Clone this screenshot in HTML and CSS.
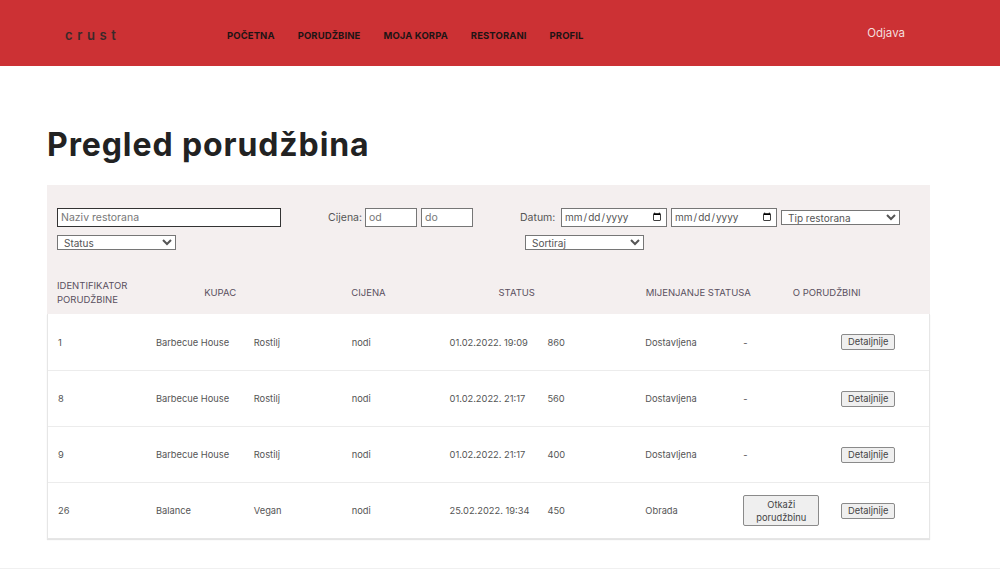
FILE: index.html
```html
<!DOCTYPE html>
<html lang="sr">
<head>
<meta charset="utf-8">
<title>Pregled porudžbina</title>
<link rel="stylesheet" href="styles.css">
</head>
<body>
<header class="topbar">
  <div class="logo">crust</div>
  <nav class="nav">
    <a class="nav-link" href="#">Početna</a>
    <a class="nav-link" href="#">Porudžbine</a>
    <a class="nav-link" href="#">Moja korpa</a>
    <a class="nav-link" href="#">Restorani</a>
    <a class="nav-link" href="#">Profil</a>
  </nav>
  <a class="logout" href="#">Odjava</a>
</header>

<main class="content">
  <h1 class="title">Pregled porudžbina</h1>

  <section class="panel">
    <div class="filters">
      <div class="f-name"><input class="inp inp-name" type="text" placeholder="Naziv restorana"></div>
      <div class="f-price">
        <span class="lbl lbl-price">Cijena:</span>
        <input class="inp inp-num" type="text" placeholder="od">
        <input class="inp inp-num" type="text" placeholder="do">
      </div>
      <div class="f-date">
        <span class="lbl lbl-date">Datum:</span>
        <input class="inp inp-date" type="date">
        <input class="inp inp-date" type="date">
        <select class="sel sel-type"><option>Tip restorana</option></select>
      </div>
      <div class="f-status"><select class="sel sel-status"><option>Status</option></select></div>
      <div class="f-sort"><select class="sel sel-sort"><option>Sortiraj</option></select></div>
    </div>

    <div class="thead">
      <div class="th">Identifikator porudžbine</div>
      <div class="th">Kupac</div>
      <div class="th">Cijena</div>
      <div class="th">Status</div>
      <div class="th">Mijenjanje statusa</div>
      <div class="th">O porudžbini</div>
    </div>
  </section>

  <section class="tbody">
    <div class="tr">
      <div class="td">1</div><div class="td">Barbecue House</div><div class="td">Rostilj</div><div class="td">nodi</div><div class="td">01.02.2022. 19:09</div><div class="td">860</div><div class="td">Dostavljena</div><div class="td">-</div><div class="td"><button class="btn">Detaljnije</button></div>
    </div>
    <div class="tr">
      <div class="td">8</div><div class="td">Barbecue House</div><div class="td">Rostilj</div><div class="td">nodi</div><div class="td">01.02.2022. 21:17</div><div class="td">560</div><div class="td">Dostavljena</div><div class="td">-</div><div class="td"><button class="btn">Detaljnije</button></div>
    </div>
    <div class="tr">
      <div class="td">9</div><div class="td">Barbecue House</div><div class="td">Rostilj</div><div class="td">nodi</div><div class="td">01.02.2022. 21:17</div><div class="td">400</div><div class="td">Dostavljena</div><div class="td">-</div><div class="td"><button class="btn">Detaljnije</button></div>
    </div>
    <div class="tr">
      <div class="td">26</div><div class="td">Balance</div><div class="td">Vegan</div><div class="td">nodi</div><div class="td">25.02.2022. 19:34</div><div class="td">450</div><div class="td">Obrada</div><div class="td"><button class="btn btn-cancel">Otkaži porudžbinu</button></div><div class="td"><button class="btn">Detaljnije</button></div>
    </div>
  </section>
</main>

<footer class="footer"></footer>
</body>
</html>
```

FILE: styles.css
```css
* { box-sizing: border-box; }

html, body {
  margin: 0;
  padding: 0;
  background: #ffffff;
  font-family: Inter, "Open Sans", "DejaVu Sans", sans-serif;
  color: #444;
}

.topbar {
  height: 66px;
  background: #cc3134;
  display: flex;
  align-items: center;
  padding: 4px 0 0 65px;
}

.logo {
  font-size: 13px;
  font-weight: 600;
  letter-spacing: 4.6px;
  color: #3a2a2a;
  width: 162px;
}

.nav {
  display: flex;
  gap: 23px;
}

.nav-link {
  font-size: 9.5px;
  font-weight: 700;
  text-transform: uppercase;
  color: #1e1414;
  text-decoration: none;
  letter-spacing: 0.1px;
}

.logout {
  margin-left: auto;
  margin-right: 95px;
  margin-top: -4px;
  font-size: 11.5px;
  color: #f4dede;
  text-decoration: none;
}

.content {
  padding: 0 70px 0 47px;
}

.title {
  margin: 0;
  padding: 60px 0 21px;
  font-size: 32px;
  line-height: 38px;
  font-weight: 700;
  color: #222;
  letter-spacing: 0.9px;
}

.panel {
  background: #f4efef;
  padding: 22px 0 0;
}

.filters {
  display: grid;
  grid-template-columns: 271px 192px auto;
  grid-template-rows: 20px 16px;
  row-gap: 7px;
  padding-left: 10px;
  align-items: center;
}

.f-name, .f-date, .f-price, .f-status, .f-sort {
  display: flex;
  align-items: center;
  gap: 4px;
  height: 100%;
}
.f-status { grid-column: 1; }
.f-sort { grid-column: 3; padding-left: 5px; }

.lbl {
  font-size: 10.5px;
  color: #555;
  white-space: nowrap;
}
.lbl-price { width: 33px; }
.lbl-date { width: 37px; }

.inp, .sel {
  font-family: inherit;
  font-size: 10.5px;
  color: #444;
  height: 19px;
  border: 1px solid #767676;
  background: #fff;
  border-radius: 0;
  padding: 0 3px;
  margin: 0;
}

.inp::placeholder { color: #777; }

.inp-name { width: 224px; border-color: #333; }
.inp-num { width: 52px; }
.inp-date { width: 106px; font-size: 10px; color: #555; padding: 0 2px; }
.sel { height: 15px; padding: 0 2px; font-size: 10px; color: #555; }
.sel-type { width: 119px; }
.sel-status { width: 119px; }
.sel-sort { width: 119px; }

.thead {
  display: grid;
  grid-template-columns: repeat(6, 1fr);
  padding: 29px 0 7px;
}

.th {
  font-size: 9.5px;
  line-height: 14px;
  text-transform: uppercase;
  color: #5a5060;
  padding-left: 10px;
  align-self: center;
}

.th:first-child { max-width: 100px; }

.tbody {
  background: #fff;
  border: 1px solid #e6e6e6;
  border-top: none;
  box-shadow: 0 1px 1px #e4e4e4;
}

.tr {
  display: grid;
  grid-template-columns: repeat(9, 1fr);
  height: 56px;
  align-items: center;
  border-top: 1px solid #ececec;
}

.tr:first-child { border-top: none; }

.td {
  font-size: 9.3px;
  color: #555;
  padding-left: 10px;
  white-space: nowrap;
}

.btn {
  font-family: inherit;
  font-size: 9.3px;
  color: #444;
  background: #efefef;
  border: 1px solid #8a8a8a;
  border-radius: 2px;
  padding: 1px 6px;
  height: 16px;
  line-height: 12px;
}

.btn-cancel {
  width: 76px;
  height: 31px;
  white-space: normal;
  line-height: 13px;
  padding: 1px 4px;
}

.footer {
  margin-top: 29px;
  border-top: 1px solid #f0f0f0;
  height: 40px;
}
```
